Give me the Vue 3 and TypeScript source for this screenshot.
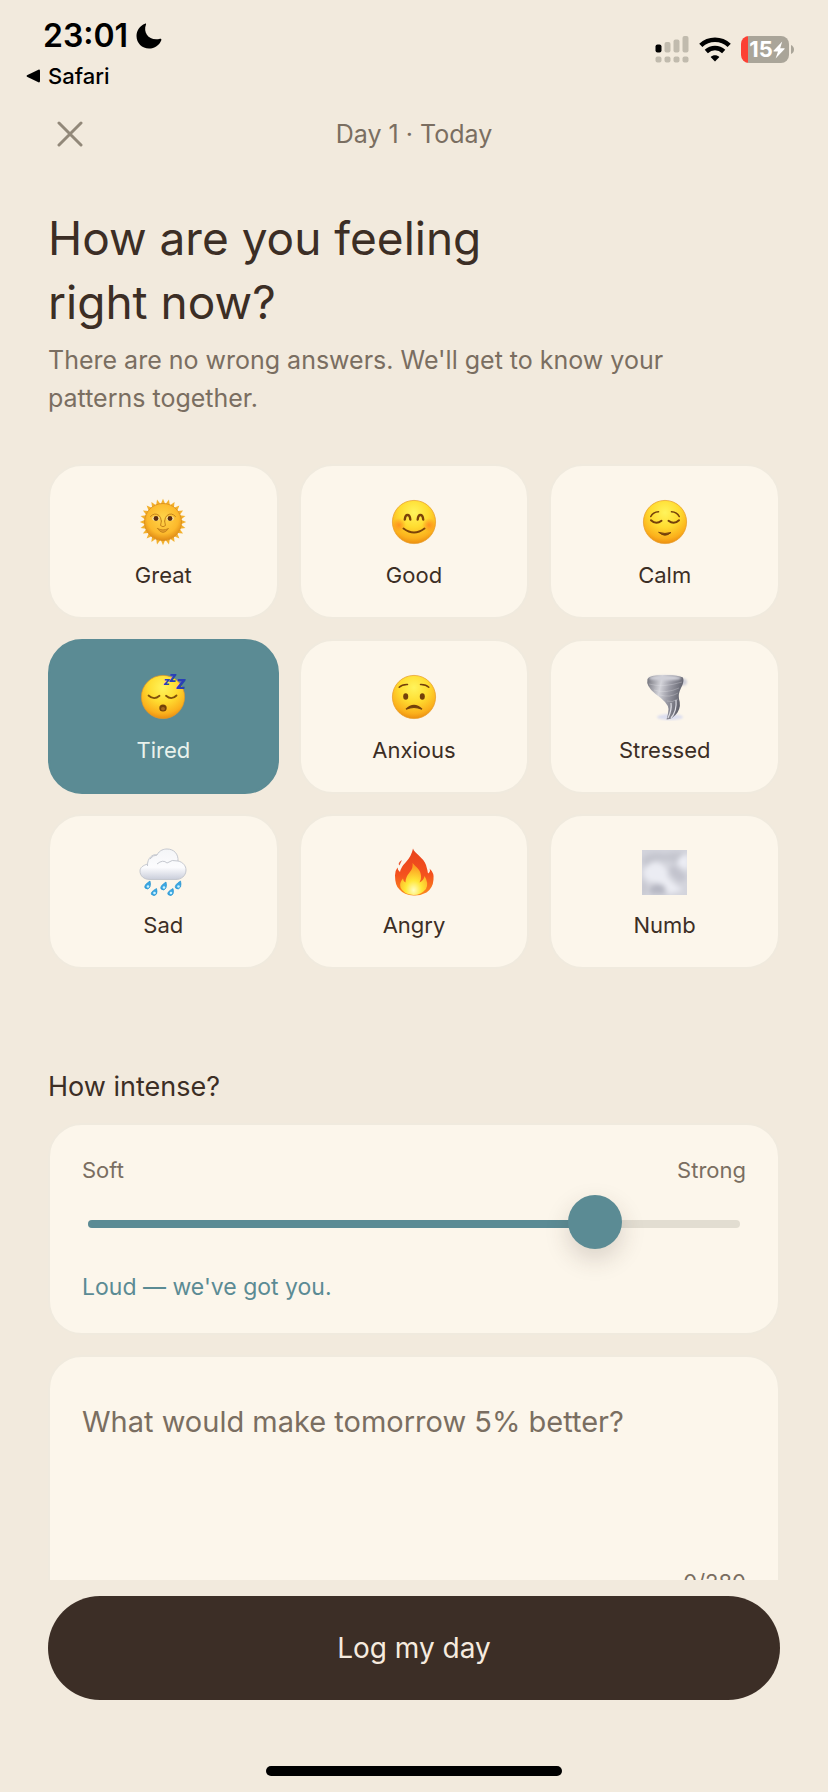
<script setup lang="ts">
import { computed, ref } from 'vue'

interface Mood {
  id: string
  label: string
}

const moods: Mood[] = [
  { id: 'great', label: 'Great' },
  { id: 'good', label: 'Good' },
  { id: 'calm', label: 'Calm' },
  { id: 'tired', label: 'Tired' },
  { id: 'anxious', label: 'Anxious' },
  { id: 'stressed', label: 'Stressed' },
  { id: 'sad', label: 'Sad' },
  { id: 'angry', label: 'Angry' },
  { id: 'numb', label: 'Numb' },
]

const selected = ref('tired')
const intensity = ref(8)
const note = ref('')
const noteLimit = 280

const fillWidth = computed(() => `${((intensity.value - 1) / 9) * 100}%`)
const intensityText = computed(() => {
  if (intensity.value >= 7) return "Loud — we've got you."
  if (intensity.value >= 4) return 'Present — noticed.'
  return 'Quiet — just a whisper.'
})

// Evenly spaced rays around the sun face
const rays = Array.from({ length: 24 }, (_, i) => `rotate(${i * 15} 24 24)`)
const faces = ['good', 'calm', 'tired', 'anxious']
</script>

<template>
  <div class="screen">
    <svg class="defs" aria-hidden="true">
      <defs>
        <radialGradient id="face" cx="0.5" cy="0.28" r="0.75">
          <stop offset="0" stop-color="#fff45c" />
          <stop offset="0.45" stop-color="#ffdc30" />
          <stop offset="0.8" stop-color="#fbb01c" />
          <stop offset="1" stop-color="#e8860e" />
        </radialGradient>
        <radialGradient id="sun" cx="0.5" cy="0.4" r="0.6">
          <stop offset="0" stop-color="#ffd54a" />
          <stop offset="0.7" stop-color="#fcb92c" />
          <stop offset="1" stop-color="#e08a14" />
        </radialGradient>
        <radialGradient id="blush">
          <stop offset="0" stop-color="#ff7a1c" stop-opacity="0.7" />
          <stop offset="1" stop-color="#ff7a1c" stop-opacity="0" />
        </radialGradient>
        <linearGradient id="funnel" x1="0" y1="0" x2="1" y2="0.25">
          <stop offset="0" stop-color="#6d6d76" />
          <stop offset="0.4" stop-color="#d4d4da" />
          <stop offset="0.65" stop-color="#9b9ba5" />
          <stop offset="1" stop-color="#5f606b" />
        </linearGradient>
        <linearGradient id="cloud" x1="0" y1="0" x2="0" y2="1">
          <stop offset="0" stop-color="#f4f5f7" />
          <stop offset="0.6" stop-color="#fcfcfe" />
          <stop offset="1" stop-color="#c9cdda" />
        </linearGradient>
        <linearGradient id="flame" x1="0" y1="0" x2="0" y2="1">
          <stop offset="0" stop-color="#e8421c" />
          <stop offset="0.55" stop-color="#f4511e" />
          <stop offset="1" stop-color="#fb8a1e" />
        </linearGradient>
        <radialGradient id="ember" cx="0.5" cy="0.85" r="0.75">
          <stop offset="0" stop-color="#fffcc0" />
          <stop offset="0.4" stop-color="#ffe838" />
          <stop offset="1" stop-color="#fd9a20" />
        </radialGradient>
        <filter id="soft" x="-0.5" y="-0.5" width="2" height="2">
          <feGaussianBlur stdDeviation="2.500" />
        </filter>
        <filter id="wisp" x="-0.3" y="-0.3" width="1.6" height="1.6">
          <feGaussianBlur stdDeviation="1" />
        </filter>
        <clipPath id="fogbox"><rect x="1" y="2" width="45" height="45" /></clipPath>
      </defs>
    </svg>

    <header class="status">
      <div class="status-left">
        <div class="clock">
          <span>23:01</span>
          <svg class="moon" viewBox="0 0 26 26" aria-hidden="true">
            <path d="M9 .8C9.400 0 10.400.5 10 1.500C6.500 10.500 14 18.500 24 15.800C25 15.500 25.700 16.200 25.300 17.200C23.400 22.200 18.600 25.500 13 25.500C6 25.500.5 20 .5 13C.5 7.500 4 2.700 9 .8Z" />
          </svg>
        </div>
        <a class="back" href="#">
          <svg viewBox="0 0 14 14" aria-hidden="true"><path d="M1 6.200 12.400.7Q14 .2 14 2V12Q14 13.800 12.400 13.300L1 7.800Q0 7 1 6.200Z" /></svg>
          <span>Safari</span>
        </a>
      </div>
      <div class="status-right">
        <svg class="signal" viewBox="0 0 34 27" aria-hidden="true">
          <g fill="#c1bbae">
            <rect x="9.500" y="6" width="6" height="10.500" rx="2" />
            <rect x="18.500" y="3.500" width="6" height="13" rx="2" />
            <rect x="27.500" y="0" width="6" height="16.500" rx="2" />
            <rect x=".5" y="20.500" width="6" height="6" rx="2" />
            <rect x="9.500" y="20.500" width="6" height="6" rx="2" />
            <rect x="18.500" y="20.500" width="6" height="6" rx="2" />
            <rect x="27.500" y="20.500" width="6" height="6" rx="2" />
          </g>
          <rect x=".5" y="8.500" width="6" height="8" rx="2" fill="#000" />
        </svg>
        <svg class="wifi" viewBox="0 0 32 25" aria-hidden="true">
          <g fill="none" stroke="#000" stroke-width="4.600">
            <path d="M1.800 8.400C9.800.8 22.200.8 30.200 8.400" />
            <path d="M7.300 14.500C12.300 9.800 19.700 9.800 24.700 14.500" />
          </g>
          <path d="M16 24.500 11.600 20.100C14 17.600 18 17.600 20.400 20.100Z" />
        </svg>
        <div class="battery">
          <div class="cell">
            <span>15</span>
            <svg viewBox="0 0 12 18" aria-hidden="true"><path d="M9.200.5.5 9.800Q.2 10.500 1 10.500H5L2.600 17.500 11.600 7.900Q12 7.200 11.200 7.200H7.200Z" fill="#fff" /></svg>
          </div>
          <svg class="nub" viewBox="0 0 3 9" aria-hidden="true"><path d="M0 0Q3 1.500 3 4.500T0 9Z" fill="#aaa599" /></svg>
        </div>
      </div>
    </header>

    <nav class="topbar">
      <button class="close" type="button" aria-label="Close">
        <svg viewBox="0 0 26 26" aria-hidden="true"><path d="M2 2 24 24M24 2 2 24" /></svg>
      </button>
      <p class="date">Day 1 · Today</p>
    </nav>

    <main class="content">
      <h1>How are you feeling<br />right now?</h1>
      <p class="lead">There are no wrong answers. We'll get to know your patterns together.</p>

      <div class="moods" role="group" aria-label="Mood">
        <button
          v-for="mood in moods"
          :key="mood.id"
          type="button"
          class="mood"
          :class="{ active: selected === mood.id }"
          :aria-pressed="selected === mood.id"
          @click="selected = mood.id"
        >
          <svg class="emoji" viewBox="0 0 48 48" aria-hidden="true">
            <g v-if="mood.id === 'great'">
              <path v-for="ray in rays" :key="ray" d="M21.800 6 24 .8 26.200 6Z" :transform="ray" fill="#f3b02c" />
              <circle cx="24" cy="24" r="18.500" fill="url(#sun)" stroke="#d98d1c" stroke-width=".8" />
              <g fill="none" stroke="#c7841b" stroke-width="1" stroke-linecap="round">
                <path d="M11.500 18.500Q15.500 14 20 17.500Q22 19 22.300 23" />
                <path d="M36.500 18.500Q32.500 14 28 17.500Q26 19 25.700 23" />
                <path d="M22.400 23 21.500 27.500Q24 30 26.500 27.500L25.600 23" />
                <path d="M18.500 30.500Q24 33.500 29.500 30.500Q24 38.500 18.500 30.500Z" fill="#e59f2b" />
              </g>
              <ellipse cx="16.800" cy="20.500" rx="3.600" ry="2.300" fill="#f9e2a0" />
              <ellipse cx="31.200" cy="20.500" rx="3.600" ry="2.300" fill="#f9e2a0" />
              <circle cx="17" cy="20.500" r="2.400" fill="#5a2c10" />
              <circle cx="31" cy="20.500" r="2.400" fill="#5a2c10" />
            </g>

            <g v-else-if="faces.includes(mood.id)">
              <circle cx="24" cy="24" r="21.600" fill="url(#face)" stroke="#e69a22" stroke-width=".7" />
              <g v-if="mood.id === 'good'" fill="none" stroke="#7b4208" stroke-linecap="round">
                <circle cx="9" cy="27" r="7" fill="url(#blush)" stroke="none" />
                <circle cx="39" cy="27" r="7" fill="url(#blush)" stroke="none" />
                <path d="M14.800 21.500C15.300 15.500 19.800 15.500 20.300 21.500M27.700 21.500C28.200 15.500 32.700 15.500 33.200 21.500" stroke-width="2.400" />
                <path d="M13.500 30.500Q24 38.500 34.500 30.500" stroke-width="2" />
              </g>
              <g v-else-if="mood.id === 'calm'" fill="none" stroke="#74400a" stroke-linecap="round">
                <path d="M9.800 18.500Q12 14 17.500 13.800M30.500 13.800Q36 14 38.200 18.500" stroke-width="1.600" />
                <path d="M10 22.200Q15 27 20.500 22.800M27.500 22.800Q33 27 38 22.200" stroke-width="2" />
                <path d="M18 34.500Q24 36.500 30 34.500Q24 40 18 34.500Z" fill="#74400a" stroke-width="1" />
              </g>
              <g v-else-if="mood.id === 'tired'">
                <path d="M9.500 22.500Q15 27.500 20.500 22.800M27 22.800Q32.500 27.500 37.500 22.500" fill="none" stroke="#81500b" stroke-width="1.800" stroke-linecap="round" />
                <ellipse cx="24" cy="35" rx="3.700" ry="3.500" fill="#744007" />
                <ellipse cx="24" cy="35.800" rx="2" ry="1.700" fill="#a7671b" />
                <g class="zs">
                  <text x="24.500" y="12" font-size="11">z</text>
                  <text x="30" y="9" font-size="13">z</text>
                  <text x="37" y="15.500" font-size="17">z</text>
                </g>
              </g>
              <g v-else fill="none" stroke="#74400a" stroke-linecap="round">
                <path d="M9.200 14.200Q12 11.200 17.500 11.400M30.500 11.400Q36 11.200 38.800 14.200" stroke-width="1.500" />
                <ellipse cx="15.700" cy="23.500" rx="2.500" ry="3.200" fill="#74400a" stroke="none" />
                <ellipse cx="32.300" cy="23.500" rx="2.500" ry="3.200" fill="#74400a" stroke="none" />
                <path d="M16 36.200Q24 28.800 32 36.200Q24 32.800 16 36.200Z" fill="#74400a" stroke-width="1.200" />
              </g>
            </g>

            <g v-else-if="mood.id === 'stressed'">
              <ellipse cx="29" cy="44" rx="13" ry="3" fill="#dcdeee" filter="url(#wisp)" />
              <ellipse cx="42" cy="9" rx="4" ry="3.500" fill="#cfcfd8" filter="url(#wisp)" />
              <path d="M6.500 6Q4.500 13 14.500 21Q27.500 30 27.500 36Q27.300 41 25.500 46.500Q32 46 36.500 39.500Q40.500 33 38 26Q37 21 40 15Q43.500 9 42 4.500Q36 1.500 23 2Q8 2 6.500 6Z" fill="url(#funnel)" />
              <g fill="none" stroke="#e8e8ee" stroke-width=".8" stroke-opacity=".35">
                <path d="M8 11Q22 15 41 9M13 17Q25 21 38 15M19 22Q29 25 37 20M26 28Q31 30 37 26" />
                <path d="M30 45Q36 38 35 27M27 45Q31 37 30 30" stroke-opacity=".9" stroke-width="1.200" />
              </g>
              <ellipse cx="24" cy="5" rx="16" ry="2.600" fill="#d0d0d8" filter="url(#wisp)" />
            </g>

            <g v-else-if="mood.id === 'sad'">
              <g stroke="#c5c8cf" stroke-width="1">
                <path d="M8.500 18C8 10 14 5.500 18 7C20.500 2 25 1 28 1C35 1 39.500 6 39 13C44 14 47 18 47 22C47 28 42 31.500 37 31.500H11C5 31.500 1 28 1 23C1 19.500 4 17.500 8.500 16Z" fill="url(#cloud)" />
                <path d="M18 7Q14 7 11 11M18 16Q24 11 28 15Q33 11 39 13" fill="none" />
              </g>
              <g fill="#3ba7e3" stroke="#1689c9" stroke-width=".6">
                <path d="M11 33Q4.500 37 6 40Q9 42.500 11 39Q12 36 11 33Z" />
                <path d="M27 34Q20.500 38 22 41Q25 43.500 27 40Q28 37 27 34Z" />
                <path d="M41.500 33Q35 37 36.500 40Q39.500 42.500 41.500 39Q42.500 36 41.500 33Z" />
                <path d="M17.500 40.500Q11 44 12.500 46.500Q15.500 49 17.500 46Q18.500 43.500 17.500 40.500Z" />
                <path d="M34 40.500Q27.500 44 29 46.500Q32 49 34 46Q35 43.500 34 40.500Z" />
              </g>
              <g fill="#c9f1ff">
                <circle cx="9" cy="38.500" r="1.300" />
                <circle cx="25" cy="39.500" r="1.300" />
                <circle cx="39.500" cy="38.500" r="1.300" />
                <circle cx="15.500" cy="45" r="1.300" />
                <circle cx="32" cy="45" r="1.300" />
              </g>
            </g>

            <g v-else-if="mood.id === 'angry'">
              <path d="M23 .5C24 5 34 10 36 17Q37.500 22 38 25.500Q41 23.500 39.500 20.500Q44.500 25 43.500 31.500Q43 40 36.500 44.500Q30 48 23.500 47.500Q14 47 9.500 41.500Q5 38 5 27.500Q5 22.500 7.500 19.500Q7.500 22 10 24Q11 19 16 14Q21.500 8 23 .5Z" fill="url(#flame)" />
              <path d="M9.500 17.500Q7 15 12 12Q10.500 15 9.500 17.500Z" fill="#ea5632" />
              <path d="M22.500 15C26 19 31 22 31 28Q31.500 31 29.500 34.500Q34 32 34.500 28Q39 35 36 41Q31 47 23.500 47Q13 46 10.500 39.500Q9 35 13 30.500Q13 33 15.500 34.500Q15.500 29 19.500 24.500Q23.500 20 22.500 15Z" fill="url(#ember)" />
            </g>

            <g v-else clip-path="url(#fogbox)">
              <rect x="1" y="2" width="45" height="45" fill="#d3d4dc" />
              <g filter="url(#soft)">
                <path d="M0 12Q8 2 24 6Q38 2 44 6L36 16Q28 12 22 13Q12 10 6 20Z" fill="#c5c6cf" />
                <path d="M2 24Q8 12 18 15Q28 20 26 28Q32 36 42 42L28 46Q22 34 12 34Q4 34 2 24Z" fill="#ebecf3" />
                <path d="M36 14Q42 4 48 8V22Q38 20 36 14Z" fill="#ecedf4" />
                <path d="M32 17Q42 24 46 30L40 34Q30 30 28 22Z" fill="#c2c3cd" />
                <path d="M8 42Q14 32 24 38L24 46H10Z" fill="#b6b7c3" />
                <path d="M0 30 6 38 4 48H0Z" fill="#c4c5ce" />
              </g>
            </g>
          </svg>
          <span>{{ mood.label }}</span>
        </button>
      </div>

      <h2 id="intensity-title">How intense?</h2>
      <section class="card intensity">
        <div class="ends">
          <span>Soft</span>
          <span>Strong</span>
        </div>
        <div class="slider">
          <div class="track"><div class="fill" :style="{ width: fillWidth }"></div></div>
          <input v-model.number="intensity" type="range" min="1" max="10" step="1" aria-labelledby="intensity-title" />
        </div>
        <p class="reading">{{ intensityText }}</p>
      </section>

      <section class="card note">
        <textarea
          v-model="note"
          :maxlength="noteLimit"
          aria-label="What would make tomorrow 5% better?"
          placeholder="What would make tomorrow 5% better?"
        ></textarea>
        <p class="count">{{ note.length }}/{{ noteLimit }}</p>
      </section>
    </main>

    <footer class="footer">
      <button class="submit" type="button">Log my day</button>
      <div class="home"></div>
    </footer>
  </div>
</template>

<style>
body {
  margin: 0;
  background: #f2eadd;
}
</style>

<style scoped>
.screen {
  display: flex;
  flex-direction: column;
  height: 100vh;
  background: #f2eadd;
  color: #3c2e25;
  font-family: Inter, "Liberation Sans", sans-serif;
}
.screen *,
.screen *::before {
  box-sizing: border-box;
}
.defs {
  position: absolute;
  width: 0;
  height: 0;
}
h1,
h2,
p {
  margin: 0;
  font-weight: 400;
}
button {
  font: inherit;
  color: inherit;
  cursor: pointer;
}

.status {
  flex: none;
  display: flex;
  justify-content: space-between;
  height: 100px;
  padding: 16px 34px 0 26px;
  color: #000;
}
.clock {
  display: flex;
  align-items: center;
  gap: 8px;
  padding-left: 17px;
  font-size: 32px;
  font-weight: 600;
  line-height: 40px;
}
.moon {
  width: 26px;
  height: 26px;
}
.back {
  display: flex;
  align-items: center;
  gap: 8px;
  color: #000;
  font-size: 22px;
  font-weight: 500;
  line-height: 40px;
  text-decoration: none;
}
.back svg {
  width: 14px;
  height: 14px;
}
.status-right {
  display: flex;
  align-items: center;
  gap: 10px;
  height: 67px;
}
.signal {
  width: 34px;
  height: 27px;
}
.wifi {
  width: 32px;
  height: 25px;
}
.battery {
  display: flex;
  align-items: center;
  gap: 2px;
}
.cell {
  display: flex;
  align-items: center;
  justify-content: center;
  width: 48px;
  height: 27px;
  padding-left: 4px;
  border-radius: 8px;
  background: linear-gradient(to right, #fc4033 7px, #aaa599 7px);
  color: #fff;
  font-size: 22px;
  font-weight: 700;
  line-height: 27px;
}
.cell svg {
  width: 12px;
  height: 18px;
}
.nub {
  width: 3px;
  height: 9px;
}

.topbar {
  flex: none;
  display: grid;
  grid-template-columns: 44px 1fr 44px;
  align-items: center;
  height: 68px;
  padding: 0 48px;
}
.close {
  display: flex;
  align-items: center;
  justify-content: center;
  width: 44px;
  height: 44px;
  padding: 0;
  border: 0;
  background: none;
}
.close svg {
  width: 26px;
  height: 26px;
  fill: none;
  stroke: #928879;
  stroke-width: 3;
  stroke-linecap: round;
}
.date {
  color: #7a6e61;
  font-size: 25px;
  line-height: 36px;
  text-align: center;
}

.content {
  flex: 1;
  min-height: 0;
  overflow-y: auto;
  padding: 38px 48px 24px;
  scrollbar-width: none;
}
h1 {
  font-size: 46px;
  line-height: 64px;
}
.lead {
  max-width: 680px;
  margin-top: 7px;
  color: #7a6e61;
  font-size: 25px;
  line-height: 38px;
}
.moods {
  display: grid;
  grid-template-columns: repeat(3, 1fr);
  gap: 20px;
  margin-top: 47px;
}
.mood {
  display: flex;
  flex-direction: column;
  align-items: center;
  height: 155px;
  padding: 32px 8px 0;
  border: 2px solid #f0eade;
  border-radius: 34px;
  background: #fcf6eb;
  font-size: 22px;
  line-height: 28px;
}
.mood.active {
  border-color: #5b8b94;
  background: #5b8b94;
  color: #e9f2ec;
}
.emoji {
  width: 48px;
  height: 48px;
  margin-bottom: 15px;
}
.zs {
  fill: #2a3fb8;
  font-family: Inter, sans-serif;
  font-weight: 800;
  font-style: italic;
}

h2 {
  margin-top: 98px;
  font-size: 27px;
  line-height: 40px;
}
.card {
  border: 2px solid #f0eade;
  border-radius: 34px;
  background: #fcf6eb;
}
.intensity {
  margin-top: 16px;
  padding: 31px 32px 28px;
}
.ends {
  display: flex;
  justify-content: space-between;
  color: #7a6e61;
  font-size: 22px;
  line-height: 28px;
}
.slider {
  position: relative;
  height: 54px;
  margin: 11px 6px 0;
  padding-top: 25px;
}
.track {
  height: 8px;
  border-radius: 4px;
  background: #e2ddd1;
}
.fill {
  height: 8px;
  border-radius: 4px;
  background: #5b8b94;
}
.slider input {
  position: absolute;
  top: 0;
  left: -27px;
  width: calc(100% + 54px);
  height: 54px;
  margin: 0;
  background: none;
  appearance: none;
}
.slider input::-webkit-slider-thumb {
  width: 54px;
  height: 54px;
  border: 0;
  border-radius: 50%;
  background: #5b8b94;
  box-shadow: 0 10px 24px rgba(60, 46, 37, 0.18);
  appearance: none;
}
.reading {
  margin-top: 20px;
  color: #5b8b94;
  font-size: 23px;
  line-height: 36px;
}
.note {
  margin-top: 20px;
  padding: 45px 32px 28px;
}
.note textarea {
  display: block;
  width: 100%;
  height: 160px;
  padding: 0;
  border: 0;
  outline: 0;
  resize: none;
  background: none;
  color: inherit;
  font: inherit;
  font-size: 29px;
  line-height: 40px;
}
.note textarea::placeholder {
  color: #7a6e61;
  opacity: 1;
}
.count {
  margin-top: 6px;
  color: #7a6e61;
  font-size: 22px;
  line-height: 28px;
  text-align: right;
}

.footer {
  flex: none;
  padding: 16px 48px;
}
.submit {
  display: block;
  width: 100%;
  height: 104px;
  border: 0;
  border-radius: 52px;
  background: #3c2e26;
  color: #f6ebdf;
  font-size: 28px;
}
.home {
  width: 296px;
  height: 10px;
  margin: 66px auto 0;
  border-radius: 5px;
  background: #000;
}
</style>
